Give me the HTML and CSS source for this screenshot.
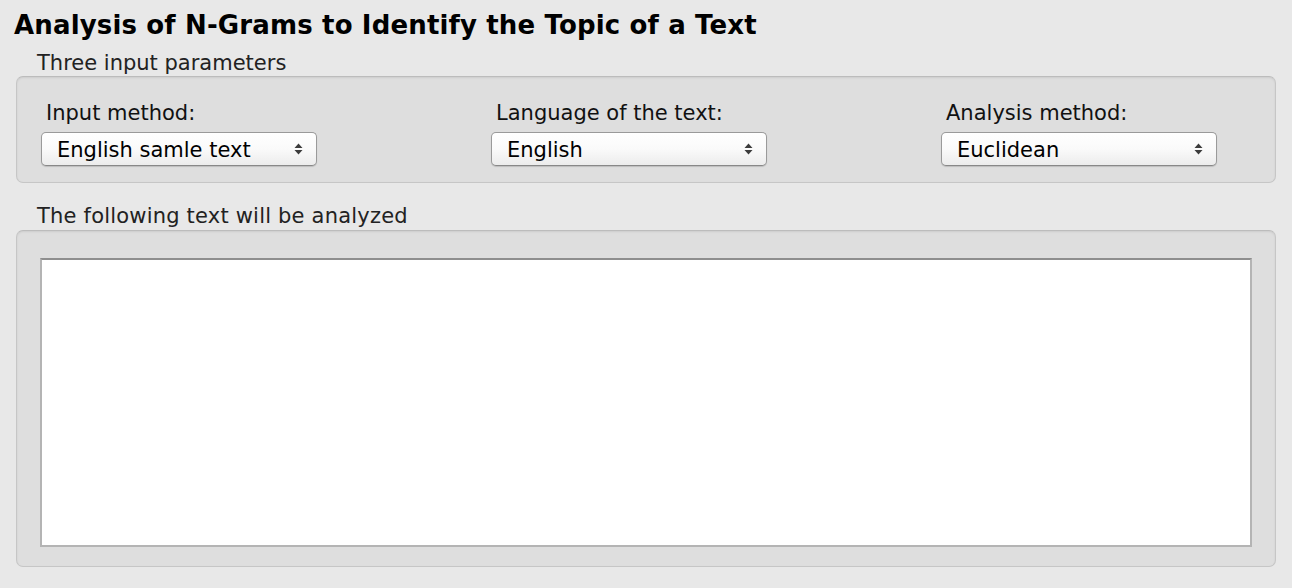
FILE: index.html
```html
<!DOCTYPE html>
<html>
<head>
<meta charset="utf-8">
<link rel="stylesheet" href="styles.css">
</head>
<body>
<div class="page">
  <h1 class="title">Analysis of N-Grams to Identify the Topic of a Text</h1>
  <div class="section-label">Three input parameters</div>
  <div class="box params">
    <div class="field">
      <div class="field-label">Input method:</div>
      <div class="select"><span>English samle text</span><svg class="arrows" width="9" height="12" viewBox="0 0 9 12"><path d="M4.5 0.5 L8.5 5 H0.5 Z M4.5 11.5 L8.5 7 H0.5 Z" fill="#3c3c3c"/></svg></div>
    </div>
    <div class="field">
      <div class="field-label">Language of the text:</div>
      <div class="select"><span>English</span><svg class="arrows" width="9" height="12" viewBox="0 0 9 12"><path d="M4.5 0.5 L8.5 5 H0.5 Z M4.5 11.5 L8.5 7 H0.5 Z" fill="#3c3c3c"/></svg></div>
    </div>
    <div class="field">
      <div class="field-label">Analysis method:</div>
      <div class="select"><span>Euclidean</span><svg class="arrows" width="9" height="12" viewBox="0 0 9 12"><path d="M4.5 0.5 L8.5 5 H0.5 Z M4.5 11.5 L8.5 7 H0.5 Z" fill="#3c3c3c"/></svg></div>
    </div>
  </div>
  <div class="section-label second">The following text will be analyzed</div>
  <div class="box textbox">
    <div class="textarea"></div>
  </div>
</div>
</body>
</html>
```

FILE: styles.css
```css
html, body {
  margin: 0;
  padding: 0;
  background: #e8e8e8;
}
body {
  font-family: "DejaVu Sans", "Lucida Grande", sans-serif;
  color: #111;
}
.page {
  padding: 8px 16px 0 16px;
  width: 1260px;
}
.title {
  margin: 0 0 0 -2px;
  font-size: 26px;
  font-weight: bold;
  line-height: 34px;
  letter-spacing: 0.15px;
  color: #000;
}
.section-label {
  font-size: 21px;
  line-height: 26px;
  color: #222;
  padding-left: 21px;
  margin-top: 8px;
  height: 26px;
}
.section-label.second {
  margin-top: 20px;
  height: 27px;
  letter-spacing: 0.2px;
}
.box {
  box-sizing: border-box;
  background: #dedede;
  border: 1px solid #c6c6c6;
  border-top-color: #bcbcbc;
  border-radius: 7px;
  box-shadow: inset 0 1px 2px rgba(0,0,0,0.08);
}
.params {
  height: 107px;
  display: flex;
  padding: 23px 0 0 24px;
  gap: 174px;
}
.field {
  width: 276px;
}
.field-label {
  font-size: 21px;
  line-height: 26px;
  color: #111;
  padding-left: 5px;
  height: 32px;
}
.select {
  box-sizing: border-box;
  height: 34px;
  width: 276px;
  border: 1px solid #9a9a9a;
  border-bottom-color: #888;
  border-radius: 5px;
  background: linear-gradient(#ffffff, #fafafa 50%, #ececec);
  box-shadow: 0 1px 1px rgba(0,0,0,0.15);
  display: flex;
  align-items: center;
  justify-content: space-between;
  padding: 0 13px 0 15px;
  font-size: 21px;
  color: #000;
}
.select span {
  line-height: 26px;
  padding-top: 2px;
}
.arrows {
  display: block;
}
.textbox {
  height: 337px;
  padding: 27px 23px 0 23px;
}
.textarea {
  box-sizing: border-box;
  height: 289px;
  background: #fff;
  border: 2px solid #b4b4b4;
  border-top-color: #8e8e8e;
}
```
